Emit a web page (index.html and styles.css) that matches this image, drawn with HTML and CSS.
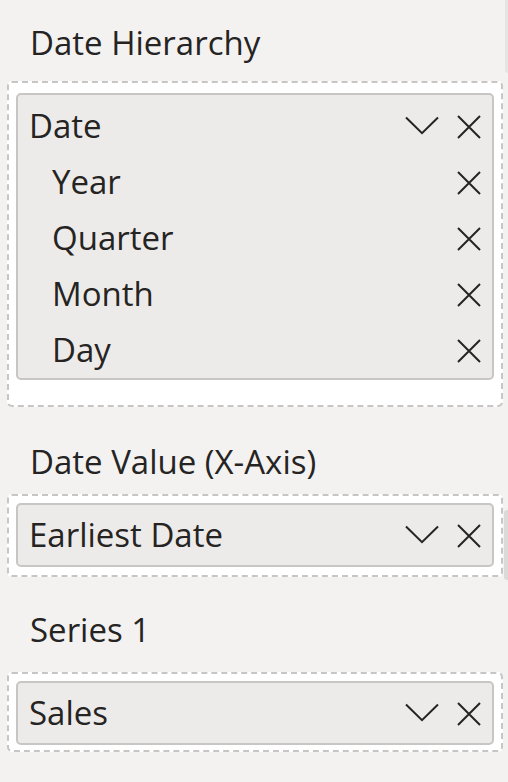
FILE: index.html
```html
<!DOCTYPE html>
<html>
<head>
<meta charset="utf-8">
<link rel="stylesheet" href="styles.css">
</head>
<body>
<div class="pane">
  <div class="main">
    <section class="field field-hier">
      <div class="label">Date Hierarchy</div>
      <div class="well well-hier">
        <div class="card card-hier">
          <div class="row">
            <span class="name">Date</span>
            <span class="icons">
              <svg class="chev" width="34" height="19" viewBox="0 0 34 19"><path d="M1 1.5 L17 17.2 L33 1.5" fill="none" stroke="#252423" stroke-width="2"/></svg>
              <svg class="x" width="24" height="24" viewBox="0 0 24 24"><path d="M1 1 L23 23 M23 1 L1 23" fill="none" stroke="#252423" stroke-width="2"/></svg>
            </span>
          </div>
          <div class="row sub">
            <span class="name">Year</span>
            <span class="icons"><svg class="x" width="24" height="24" viewBox="0 0 24 24"><path d="M1 1 L23 23 M23 1 L1 23" fill="none" stroke="#252423" stroke-width="2"/></svg></span>
          </div>
          <div class="row sub">
            <span class="name">Quarter</span>
            <span class="icons"><svg class="x" width="24" height="24" viewBox="0 0 24 24"><path d="M1 1 L23 23 M23 1 L1 23" fill="none" stroke="#252423" stroke-width="2"/></svg></span>
          </div>
          <div class="row sub">
            <span class="name">Month</span>
            <span class="icons"><svg class="x" width="24" height="24" viewBox="0 0 24 24"><path d="M1 1 L23 23 M23 1 L1 23" fill="none" stroke="#252423" stroke-width="2"/></svg></span>
          </div>
          <div class="row sub">
            <span class="name">Day</span>
            <span class="icons"><svg class="x" width="24" height="24" viewBox="0 0 24 24"><path d="M1 1 L23 23 M23 1 L1 23" fill="none" stroke="#252423" stroke-width="2"/></svg></span>
          </div>
        </div>
      </div>
    </section>

    <section class="field field-value">
      <div class="label">Date Value (X-Axis)</div>
      <div class="well well-value">
        <div class="card card-single">
          <div class="row single">
            <span class="name">Earliest Date</span>
            <span class="icons">
              <svg class="chev" width="34" height="19" viewBox="0 0 34 19"><path d="M1 1.5 L17 17.2 L33 1.5" fill="none" stroke="#252423" stroke-width="2"/></svg>
              <svg class="x" width="24" height="24" viewBox="0 0 24 24"><path d="M1 1 L23 23 M23 1 L1 23" fill="none" stroke="#252423" stroke-width="2"/></svg>
            </span>
          </div>
        </div>
      </div>
    </section>

    <section class="field field-series">
      <div class="label">Series 1</div>
      <div class="well well-series">
        <div class="card card-single">
          <div class="row single">
            <span class="name">Sales</span>
            <span class="icons">
              <svg class="chev" width="34" height="19" viewBox="0 0 34 19"><path d="M1 1.5 L17 17.2 L33 1.5" fill="none" stroke="#252423" stroke-width="2"/></svg>
              <svg class="x" width="24" height="24" viewBox="0 0 24 24"><path d="M1 1 L23 23 M23 1 L1 23" fill="none" stroke="#252423" stroke-width="2"/></svg>
            </span>
          </div>
        </div>
      </div>
    </section>
  </div>
  <div class="rail">
    <div class="rail-top"></div>
    <div class="rail-mid"></div>
  </div>
</div>
</body>
</html>
```

FILE: styles.css
```css
html, body {
  margin: 0;
  padding: 0;
  background: #f3f2f1;
}
body {
  font-family: "Open Sans", "Noto Sans", sans-serif;
  color: #252423;
  width: 508px;
  height: 782px;
  overflow: hidden;
}
.pane {
  display: flex;
  width: 508px;
  height: 782px;
}
.main {
  width: 504px;
  flex: none;
}
.rail {
  width: 4px;
  flex: none;
  display: flex;
  flex-direction: column;
  align-items: flex-end;
}
.rail-top {
  width: 3px;
  height: 73px;
  background: #e6e4e2;
  border-bottom-left-radius: 3px;
}
.rail-mid {
  margin-top: 437px;
  width: 4px;
  height: 70px;
  background: #dcdad8;
  border-top-left-radius: 3px;
  border-bottom-left-radius: 3px;
}
.label {
  font-size: 33px;
  line-height: 44px;
  height: 44px;
  padding-left: 30px;
  white-space: nowrap;
}
.field-hier .label { margin-top: 21px; }
.field-hier .well { margin-top: 16px; }
.field-value .label { margin-top: 33px; }
.field-value .well { margin-top: 10px; }
.field-series .label { margin-top: 31px; }
.field-series .well { margin-top: 20px; }

.well {
  margin-left: 7px;
  width: 496px;
  box-sizing: border-box;
  border: 2px dashed #c8c6c4;
  border-radius: 5px;
  background: #ffffff;
  padding: 7px 7px 8px 7px;
}
.well-hier { padding-top: 10px; padding-bottom: 25px; }
.well-series { padding-bottom: 5px; }

.card {
  box-sizing: border-box;
  border: 2px solid #c8c6c4;
  border-radius: 5px;
  background: #edebe9;
}
.card-hier { padding-top: 3px; }

.row {
  display: flex;
  align-items: center;
  height: 56px;
  padding-left: 11px;
  padding-right: 11px;
  font-size: 33px;
  line-height: 56px;
  white-space: nowrap;
}
.row.sub { padding-left: 34px; }
.row.single { height: 60px; line-height: 60px; }
.name { flex: 1; }
.icons {
  display: flex;
  align-items: flex-start;
  gap: 18px;
  height: 24px;
  margin-top: 2px;
}
.icons svg { display: block; }
.chev { margin-top: 1px; }
```
